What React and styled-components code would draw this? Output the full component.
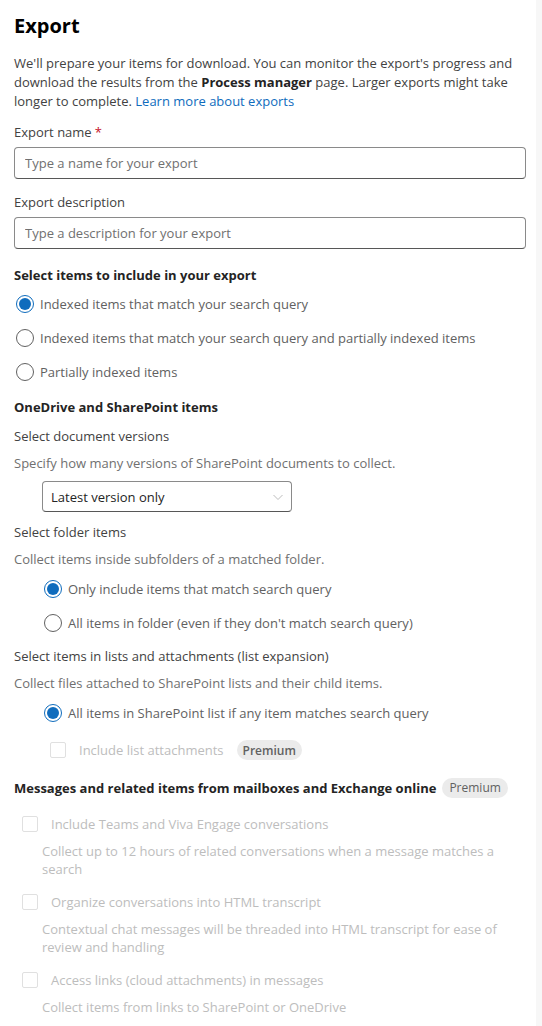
import styled, { createGlobalStyle } from 'styled-components';

const GlobalStyle = createGlobalStyle`
 html, body {
  margin: 0;
  padding: 0;
  background: #ffffff;
 }
 body {
  font-family: 'Open Sans', 'Liberation Sans', sans-serif;
  font-size: 13px;
  color: #242424;
 }
 * { box-sizing: border-box; }
`;

const Frame = styled.div`
 display: flex;
 width: 542px;
 min-height: 1026px;
`;

const Panel = styled.div`
 flex: 1;
 padding: 12px 10px 0 14px;
 display: flex;
 flex-direction: column;
`;

const ScrollRail = styled.div`
 width: 6px;
 background: #f7f7f7;
`;

const Title = styled.h1`
 margin: 0 0 14px;
 font-size: 20px;
 font-weight: 700;
 line-height: 28px;
 color: #000;
`;

const Intro = styled.p`
 margin: 0;
 line-height: 19px;
 color: #424242;
 b { font-weight: 700; color: #242424; }
`;

const Link = styled.a`
 color: #0f6cbd;
 text-decoration: none;
`;

const FieldLabel = styled.label`
 display: block;
 line-height: 20px;
 margin: ${p => p.$top ?? 12}px 0 5px;
 color: #424242;
`;

const Required = styled.span`
 color: #c50f1f;
 margin-left: 3px;
`;

const TextInput = styled.input`
 width: 100%;
 height: 32px;
 border: 1px solid #8a8a8a;
 border-bottom-color: #575757;
 border-radius: 4px;
 padding: 0 10px;
 font: inherit;
 color: #242424;
 outline: none;
 &::placeholder { color: #707070; }
`;

const SectionHeading = styled.div`
 font-weight: 700;
 line-height: 20px;
 margin: ${p => p.$top ?? 16}px 0 ${p => p.$bottom ?? 4}px;
 display: flex;
 align-items: center;
 gap: 6px;
`;

const SubHeading = styled.div`
 line-height: 20px;
 margin-top: ${p => p.$top ?? 10}px;
 color: #424242;
`;

const Hint = styled.div`
 line-height: 18px;
 margin: 8px 0 4px;
 color: #707070;
`;

const OptionRow = styled.label`
 display: flex;
 align-items: center;
 gap: 6px;
 height: 34px;
 padding-left: ${p => p.$indent ?? 2}px;
 color: #616161;
`;

const RadioDot = styled.span`
 width: 18px;
 height: 18px;
 border-radius: 50%;
 border: 1px solid ${p => (p.$checked ? '#0f6cbd' : '#616161')};
 display: flex;
 align-items: center;
 justify-content: center;
 flex-shrink: 0;
 &::after {
  content: '';
  width: 12px;
  height: 12px;
  border-radius: 50%;
  background: ${p => (p.$checked ? '#0f6cbd' : 'transparent')};
 }
`;

const Select = styled.div`
 margin: 5px 0 0 28px;
 width: 250px;
 height: 31px;
 border: 1px solid #8a8a8a;
 border-bottom-color: #575757;
 border-radius: 4px;
 padding: 0 7px 0 8px;
 display: flex;
 align-items: center;
 justify-content: space-between;
 color: #242424;
`;

const CheckRow = styled.div`
 display: flex;
 align-items: center;
 gap: 13px;
 height: 30px;
 padding-left: ${p => p.$indent ?? 8}px;
 margin-top: ${p => p.$top ?? 0}px;
 color: #bdbdbd;
`;

const CheckBox = styled.span`
 width: 16px;
 height: 16px;
 border: 1px solid #e0e0e0;
 border-radius: 2px;
 flex-shrink: 0;
`;

const Badge = styled.span`
 display: inline-flex;
 align-items: center;
 height: 20px;
 padding: 0 ${p => (p.$bold ? 6 : 7)}px;
 border-radius: 10px;
 background: #ebebeb;
 color: #616161;
 font-size: 12px;
 font-weight: ${p => (p.$bold ? 600 : 400)};
`;

const CheckDesc = styled.div`
 padding-left: 28px;
 line-height: 18px;
 margin: 3px 0 9px;
 color: #bdbdbd;
`;

function Radio({ checked, indent, children }) {
 return (
  <OptionRow $indent={indent}>
   <RadioDot $checked={checked} />
   {children}
  </OptionRow>
 );
}

function Chevron() {
 return (
  <svg width="12" height="12" viewBox="0 0 12 12" fill="none">
   <path d="M1.5 4 L6 8.5 L10.5 4" stroke="#bdbdbd" strokeWidth="1" />
  </svg>
 );
}

export default function App() {
 return (
  <Frame>
   <GlobalStyle />
   <Panel>
    <Title>Export</Title>
    <Intro>
     We'll prepare your items for download. You can monitor the export's progress and download the results
     from the <b>Process manager</b> page. Larger exports might take longer to complete.{' '}
     <Link href="#">Learn more about exports</Link>
    </Intro>

    <FieldLabel $top={11}>
     Export name<Required>*</Required>
    </FieldLabel>
    <TextInput placeholder="Type a name for your export" />

    <FieldLabel $top={13}>Export description</FieldLabel>
    <TextInput placeholder="Type a description for your export" />

    <SectionHeading $top={16} $bottom={2}>Select items to include in your export</SectionHeading>
    <Radio checked>Indexed items that match your search query</Radio>
    <Radio>Indexed items that match your search query and partially indexed items</Radio>
    <Radio>Partially indexed items</Radio>

    <SectionHeading $top={8} $bottom={0}>OneDrive and SharePoint items</SectionHeading>
    <SubHeading $top={9}>Select document versions</SubHeading>
    <Hint>Specify how many versions of SharePoint documents to collect.</Hint>
    <Select>
     Latest version only
     <Chevron />
    </Select>

    <SubHeading>Select folder items</SubHeading>
    <Hint>Collect items inside subfolders of a matched folder.</Hint>
    <Radio checked indent={30}>Only include items that match search query</Radio>
    <Radio indent={30}>All items in folder (even if they don't match search query)</Radio>

    <SubHeading $top={6}>Select items in lists and attachments (list expansion)</SubHeading>
    <Hint>Collect files attached to SharePoint lists and their child items.</Hint>
    <Radio checked indent={30}>All items in SharePoint list if any item matches search query</Radio>
    <CheckRow $indent={36} $top={5}>
     <CheckBox />
     Include list attachments
     <Badge $bold>Premium</Badge>
    </CheckRow>

    <SectionHeading $top={13} $bottom={11}>
     Messages and related items from mailboxes and Exchange online
     <Badge>Premium</Badge>
    </SectionHeading>

    <CheckRow>
     <CheckBox />
     Include Teams and Viva Engage conversations
    </CheckRow>
    <CheckDesc>
     Collect up to 12 hours of related conversations when a message matches a search
    </CheckDesc>
    <CheckRow>
     <CheckBox />
     Organize conversations into HTML transcript
    </CheckRow>
    <CheckDesc>
     Contextual chat messages will be threaded into HTML transcript for ease of review and handling
    </CheckDesc>
    <CheckRow>
     <CheckBox />
     Access links (cloud attachments) in messages
    </CheckRow>
    <CheckDesc>Collect items from links to SharePoint or OneDrive</CheckDesc>
   </Panel>
   <ScrollRail />
  </Frame>
 );
}
